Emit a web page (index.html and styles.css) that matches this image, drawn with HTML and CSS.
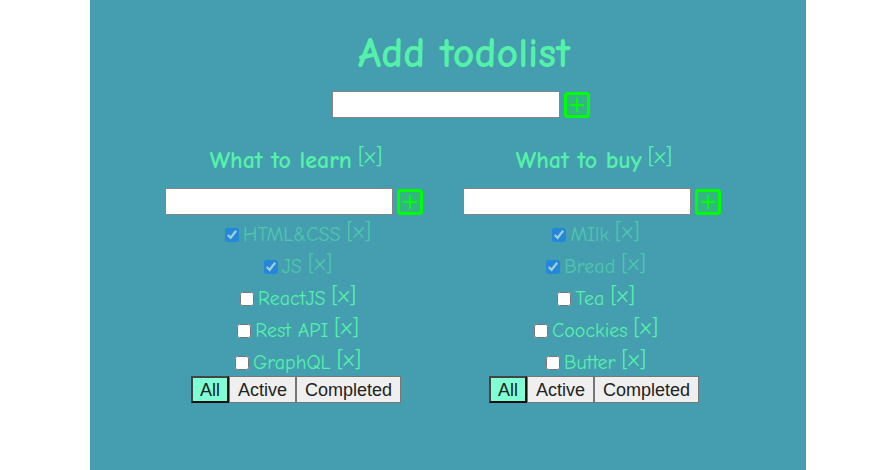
FILE: index.html
```html
<!DOCTYPE html>
<html lang="en">
<head>
<meta charset="utf-8">
<title>Todolist</title>
<link rel="stylesheet" href="styles.css">
</head>
<body>
<svg class="defs" aria-hidden="true">
  <symbol id="plus" viewBox="0 0 26 26">
    <rect x="1.5" y="1.5" width="23" height="23" rx="2" fill="#00ff00" fill-opacity=".25" stroke="#00ff00" stroke-width="3"/>
    <path d="M13 6v14M6 13h14" fill="none" stroke="#00ff00" stroke-width="2"/>
  </symbol>
</svg>
<main class="app">
  <header class="top">
    <h1>Add todolist</h1>
    <form class="add">
      <input type="text" aria-label="New todolist title">
      <button type="button" class="plus" aria-label="Add todolist"><svg><use href="#plus"/></svg></button>
    </form>
  </header>
  <div class="lists">
    <section class="list">
      <h2>What to learn <button type="button" class="remove">[x]</button></h2>
      <form class="add">
        <input type="text" aria-label="New task to learn">
        <button type="button" class="plus" aria-label="Add task"><svg><use href="#plus"/></svg></button>
      </form>
      <ul>
        <li class="done"><label><input type="checkbox" checked><span>HTML&amp;CSS</span></label><button type="button" class="remove">[x]</button></li>
        <li class="done"><label><input type="checkbox" checked><span>JS</span></label><button type="button" class="remove">[x]</button></li>
        <li><label><input type="checkbox"><span>ReactJS</span></label><button type="button" class="remove">[x]</button></li>
        <li><label><input type="checkbox"><span>Rest API</span></label><button type="button" class="remove">[x]</button></li>
        <li><label><input type="checkbox"><span>GraphQL</span></label><button type="button" class="remove">[x]</button></li>
      </ul>
      <div class="filters">
        <button type="button" class="active">All</button><button type="button">Active</button><button type="button">Completed</button>
      </div>
    </section>
    <section class="list">
      <h2>What to buy <button type="button" class="remove">[x]</button></h2>
      <form class="add">
        <input type="text" aria-label="New item to buy">
        <button type="button" class="plus" aria-label="Add item"><svg><use href="#plus"/></svg></button>
      </form>
      <ul>
        <li class="done"><label><input type="checkbox" checked><span>MIlk</span></label><button type="button" class="remove">[x]</button></li>
        <li class="done"><label><input type="checkbox" checked><span>Bread</span></label><button type="button" class="remove">[x]</button></li>
        <li><label><input type="checkbox"><span>Tea</span></label><button type="button" class="remove">[x]</button></li>
        <li><label><input type="checkbox"><span>Coockies</span></label><button type="button" class="remove">[x]</button></li>
        <li><label><input type="checkbox"><span>Butter</span></label><button type="button" class="remove">[x]</button></li>
      </ul>
      <div class="filters">
        <button type="button" class="active">All</button><button type="button">Active</button><button type="button">Completed</button>
      </div>
    </section>
  </div>
</main>
</body>
</html>
```
FILE: styles.css
```css
* { box-sizing: border-box; }
body {
  margin: 0;
  background: #fff;
  color: #54f2a8;
  font-family: "Comic Sans MS", "Comic Neue", "Noto Sans", sans-serif;
  font-size: 20px;
}
.defs { position: absolute; width: 0; height: 0; }
.app {
  width: 80%;
  min-height: 100vh;
  margin: 0 auto;
  padding: 32px 0 24px;
  background: #459db0;
}
.top { padding-left: 26px; }
h1, h2, ul { margin: 0; padding: 0; }
h1 {
  padding-left: 6px;
  font-size: 42px;
  line-height: 44px;
  text-align: center;
}
.add {
  display: flex;
  justify-content: center;
  align-items: center;
  gap: 4px;
}
.top .add { margin-top: 15px; }
.add input {
  width: 228px;
  height: 27px;
  border: 1px solid #858585;
  background: #fff;
  font-size: 18px;
}
.plus {
  width: 26px;
  height: 26px;
  padding: 0;
  border: 0;
  background: none;
}
.plus svg { display: block; width: 26px; height: 26px; }
.lists {
  display: flex;
  justify-content: center;
  gap: 40px;
  margin-top: 26px;
  padding-right: 10px;
}
h2 {
  display: flex;
  justify-content: center;
  gap: 6px;
  height: 44px;
  padding-left: 4px;
  font-size: 24px;
  line-height: 32px;
}
.remove {
  align-self: flex-start;
  padding: 0;
  border: 0;
  background: none;
  color: inherit;
  font: 22px/24px "Comic Sans MS", "Comic Neue", "Noto Sans", sans-serif;
}
ul {
  padding: 4px 0 0 8px;
  list-style: none;
}
li {
  display: flex;
  justify-content: center;
  gap: 6px;
  height: 32px;
}
li label {
  display: flex;
  align-items: center;
  gap: 4px;
  line-height: 32px;
}
li input { width: 14px; height: 14px; margin: 0; }
.done { opacity: .5; }
.filters {
  display: flex;
  justify-content: center;
  margin-top: -3px;
  padding-left: 4px;
}
.filters button {
  height: 27px;
  padding: 0 8px;
  border: 1px solid #767676;
  background: #efefef;
  color: #222;
  font: 18px/24px "Liberation Sans", sans-serif;
}
.filters .active {
  padding: 0 7px;
  border: 2px solid #111;
  border-top-color: #444;
  border-left-color: #444;
  background: #7fffd4;
}
```
